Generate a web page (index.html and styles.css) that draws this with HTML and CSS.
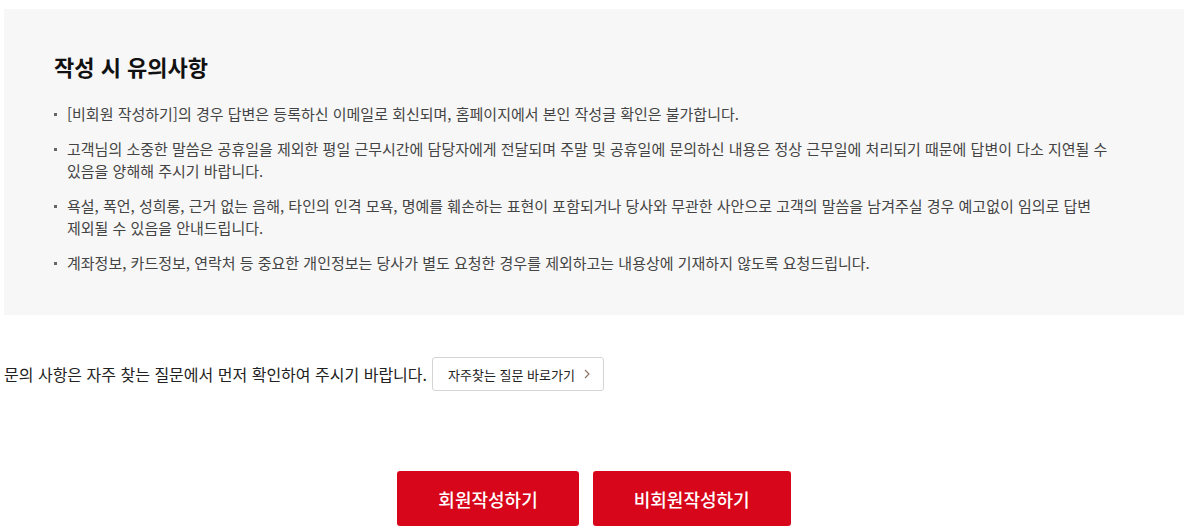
FILE: index.html
```html
<!DOCTYPE html>
<html lang="ko">
<head>
    <meta charset="UTF-8">
    <meta name="viewport" content="width=device-width, initial-scale=1.0">
    <title>문의하기</title>
    <link rel="stylesheet" href="styles.css">
</head>
<body>
    <div class="wrap">
        <div class="notice">
            <h2>작성 시 유의사항</h2>
            <ul class="notice-list">
                <li>[비회원 작성하기]의 경우 답변은 등록하신 이메일로 회신되며, 홈페이지에서 본인 작성글 확인은 불가합니다.</li>
                <li>고객님의 소중한 말씀은 공휴일을 제외한 평일 근무시간에 담당자에게 전달되며 주말 및 공휴일에 문의하신 내용은 정상 근무일에 처리되기 때문에 답변이 다소 지연될 수 있음을 양해해 주시기 바랍니다.</li>
                <li>욕설, 폭언, 성희롱, 근거 없는 음해, 타인의 인격 모욕, 명예를 훼손하는 표현이 포함되거나 당사와 무관한 사안으로 고객의 말씀을 남겨주실 경우 예고없이 임의로 답변 제외될 수 있음을 안내드립니다.</li>
                <li>계좌정보, 카드정보, 연락처 등 중요한 개인정보는 당사가 별도 요청한 경우를 제외하고는 내용상에 기재하지 않도록 요청드립니다.</li>
            </ul>
        </div>

        <div class="faq-row">
            <p>문의 사항은 자주 찾는 질문에서 먼저 확인하여 주시기 바랍니다.</p>
            <a href="#" class="faq-btn">자주찾는 질문 바로가기
                <svg width="6" height="10" viewBox="0 0 6 10"><path d="M1 1l4 4-4 4" fill="none" stroke="#8b6f5e" stroke-width="1.1"/></svg>
            </a>
        </div>

        <div class="btn-row">
            <a href="#" class="write-btn">회원작성하기</a>
            <a href="#" class="write-btn">비회원작성하기</a>
        </div>
    </div>
</body>
</html>
```

FILE: styles.css
```css
body {
    font-family: "Noto Sans CJK KR", "Noto Sans", sans-serif;
    margin: 0;
    padding: 0;
    background: #fff;
    color: #222;
    word-break: keep-all;
}
a {
    text-decoration: none;
}
.wrap {
    width: 1180px;
    margin-left: 4px;
    padding-top: 9px;
}
.notice {
    background-color: #f7f7f7;
    padding: 41px 64px 41px 50px;
}
.notice h2 {
    font-size: 22px;
    font-weight: 700;
    line-height: 32px;
    margin: 0 0 21px;
    color: #111;
}
.notice-list {
    list-style: none;
    margin: 0;
    padding: 0;
}
.notice-list li {
    position: relative;
    padding-left: 13px;
    font-size: 15px;
    line-height: 22.5px;
    color: #444;
    margin-top: 12px;
}
.notice-list li:first-child {
    margin-top: 0;
}
.notice-list li::before {
    content: "";
    position: absolute;
    left: 0;
    top: 10px;
    width: 3px;
    height: 3px;
    background-color: #666;
}
.faq-row {
    display: flex;
    align-items: center;
    gap: 5px;
    margin-top: 42px;
}
.faq-row p {
    margin: 0;
    font-size: 16px;
    color: #222;
}
.faq-btn {
    display: inline-flex;
    align-items: center;
    gap: 9px;
    height: 34px;
    box-sizing: border-box;
    padding: 0 13px 0 15px;
    border: 1px solid #d4d4d4;
    border-radius: 3px;
    font-size: 13px;
    color: #222;
    background: #fff;
}
.btn-row {
    display: flex;
    justify-content: center;
    gap: 14px;
    margin-top: 80px;
}
.write-btn {
    display: flex;
    align-items: center;
    height: 55px;
    padding: 0 41px;
    background-color: #d7061a;
    color: #fff;
    font-size: 18px;
    font-weight: 500;
    border-radius: 3px;
}
```
